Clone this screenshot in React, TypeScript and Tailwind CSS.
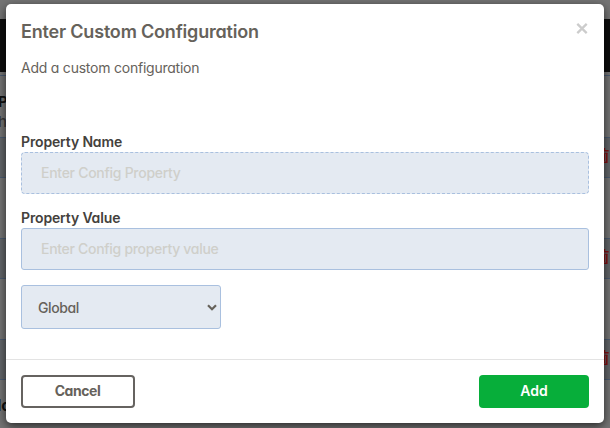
import React from "react";

function TrashIcon() {
  return (
    <svg width="11" height="16" viewBox="0 0 11 16" fill="none" stroke="#850f12" strokeWidth="1.5">
      <path d="M0 2.7H9.6M2 2.7V.8H5.4V2.7M1.2 5V14.2H7.8V5" />
      <path d="M0 5.2H8.4M3.4 6V13M5.6 6V13" strokeWidth="1.1" />
    </svg>
  );
}

function PageRow() {
  return (
    <div className="flex h-[41px] justify-end border-y border-[#4a5b71] bg-[#626569] pt-[10px]">
      <TrashIcon />
    </div>
  );
}

function Backdrop() {
  return (
    <div className="h-[428px] w-full bg-[#747474]">
      <div className="h-[19px]" />
      <div className="h-[53px] bg-[#0d0d0d]" />
      <div className="mt-[3px] h-px bg-[#4a5b71]" />
      <div className="h-[61px] pt-[16px]">
        <div className="-ml-[2px] text-[15px] leading-[20px] font-bold text-[#111]">P</div>
        <div className="-ml-[2px] text-[15px] leading-[20px] font-medium text-[#393939]">h</div>
      </div>
      <PageRow />
      <div className="h-[60px]" />
      <PageRow />
      <div className="h-[60px]" />
      <PageRow />
      <div className="-ml-[3px] pt-[14px] text-[16px] leading-[22px] font-bold text-[#111]">lo</div>
    </div>
  );
}

export default function App() {
  return (
    <div className="relative h-[428px] w-[610px] overflow-hidden font-['Inter',sans-serif] [font-feature-settings:'cv11']">
      <Backdrop />
      <div className="absolute inset-0 pt-1 pl-1.5">
        <div className="flex h-[419px] w-[598px] flex-col rounded-[5px] bg-white text-[#66625b] shadow-[0_3px_10px_rgba(0,0,0,0.65)]">
          <div className="flex h-[50px] items-start justify-between px-[15px] pt-[16px]">
            <h1 className="text-[18px] leading-[24px] font-semibold tracking-[-0.19px] whitespace-nowrap">
              Enter Custom Configuration
            </h1>
            <button aria-label="Close" className="mt-[3px] mr-[1px]">
              <svg width="12" height="11" viewBox="0 0 12 11" stroke="#cccccc" strokeWidth="2.3">
                <path d="M1.3 .9L10.7 10.1M10.7 .9L1.3 10.1" />
              </svg>
            </button>
          </div>
          <p className="h-[78px] px-[15px] pt-[4px] text-[14px] leading-[20px] tracking-[-0.23px]">Add a custom configuration</p>
          <div className="flex flex-col px-[15px]">
            <label className="h-[20px] text-[14px] leading-[20px] font-semibold tracking-[-0.14px] text-[#44413c]">Property Name</label>
            <input
              className="h-[42px] rounded-[4px] border border-dashed border-[#a9c0df] bg-[#e4eaf2] px-[19px] pb-[2px] text-[14px] font-medium tracking-[-0.28px] placeholder:text-[#cfcfca]"
              placeholder="Enter Config Property"
            />
            <label className="mt-[14px] h-[20px] text-[14px] leading-[20px] font-semibold tracking-[-0.14px] text-[#44413c]">Property Value</label>
            <input
              className="h-[42px] rounded-[3px] border border-[#a9c0df] bg-[#e4eaf2] px-[19px] pb-[2px] text-[14px] font-medium tracking-[-0.3px] placeholder:text-[#cfcfca]"
              placeholder="Enter Config property value"
            />
            <div className="mt-[15px] flex h-[44px] w-[200px] items-center justify-between rounded-[3px] border border-[#a9c0df] bg-[#e4eaf2] pr-[3px] pl-[16px] text-[14px] font-medium tracking-[-0.4px]">
              <span>Global</span>
              <svg width="10" height="7" viewBox="0 0 10 7" fill="none" stroke="#66625b" strokeWidth="2.2">
                <path d="M1 1.2L5 5.2L9 1.2" />
              </svg>
            </div>
          </div>
          <div className="mt-auto flex h-[64px] justify-between border-t border-[#e3e3e3] px-[15px] pt-[15px]">
            <button className="h-[33px] w-[114px] rounded-[4px] border-2 border-[#666360] pr-[1px] pb-[2px] text-[14px] leading-none font-bold tracking-[-0.45px]">Cancel</button>
            <button className="h-[33px] w-[110px] rounded-[4px] bg-[#07ae3a] pb-[2px] text-[14px] leading-none font-semibold text-white">Add</button>
          </div>
        </div>
      </div>
    </div>
  );
}
